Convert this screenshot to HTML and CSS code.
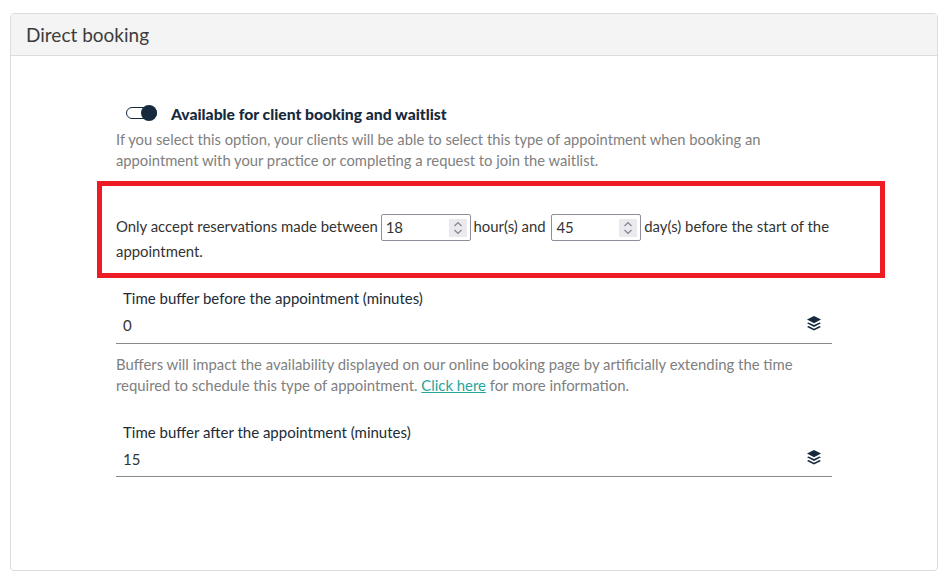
FILE: index.html
```html
<!DOCTYPE html>
<html lang="en">
<head>
  <meta charset="UTF-8" />
  <title>Direct booking</title>
  <link rel="stylesheet" href="styles.css">
</head>
<body>
  <section class="card">
    <h2 class="card-title">Direct booking</h2>
    <div class="card-body">
      <label class="switch-row">
        <span class="switch"><span class="switch-knob"></span></span>
        <span class="switch-label">Available for client booking and waitlist</span>
      </label>
      <p class="help">If you select this option, your clients will be able to select this type of appointment when booking an appointment with your practice or completing a request to join the waitlist.</p>

      <div class="highlight">
        <p class="window-text">Only accept reservations made between
          <span class="num"><input class="num-input" type="text" value="18"><span class="spin"><svg viewBox="0 0 18 18"><path d="M5.5 7 9 3.5 12.5 7"/><path d="M5.5 11 9 14.5 12.5 11"/></svg></span></span>
          hour(s) and
          <span class="num num-days"><input class="num-input" type="text" value="45"><span class="spin"><svg viewBox="0 0 18 18"><path d="M5.5 7 9 3.5 12.5 7"/><path d="M5.5 11 9 14.5 12.5 11"/></svg></span></span>
          day(s) before the start of the appointment.</p>
      </div>

      <div class="field field-first">
        <label class="field-label">Time buffer before the appointment (minutes)</label>
        <div class="field-row">
          <span class="field-value">0</span>
          <svg class="stack-icon" viewBox="0 0 16 16"><path d="M8 1 15 4.6 8 8.2 1 4.6Z"/><path d="M2.6 7.4 1 8.3 8 11.9 15 8.3 13.4 7.4 8 10.1Z"/><path d="M2.6 11 1 11.9 8 15.5 15 11.9 13.4 11 8 13.7Z"/></svg>
        </div>
      </div>
      <p class="help help-buffer">Buffers will impact the availability displayed on our online booking page by artificially extending the time required to schedule this type of appointment. <a href="#">Click here</a> for more information.</p>

      <div class="field">
        <label class="field-label">Time buffer after the appointment (minutes)</label>
        <div class="field-row">
          <span class="field-value">15</span>
          <svg class="stack-icon" viewBox="0 0 16 16"><path d="M8 1 15 4.6 8 8.2 1 4.6Z"/><path d="M2.6 7.4 1 8.3 8 11.9 15 8.3 13.4 7.4 8 10.1Z"/><path d="M2.6 11 1 11.9 8 15.5 15 11.9 13.4 11 8 13.7Z"/></svg>
        </div>
      </div>
    </div>
  </section>
</body>
</html>
```

FILE: styles.css
```css
* {
  box-sizing: border-box;
}

html, body {
  margin: 0;
  padding: 0;
  background: #fff;
}

body {
  font-family: Lato, sans-serif;
  font-size: 15px;
  color: #212b36;
}

.card {
  width: 928px;
  height: 558px;
  margin: 13px 0 0 10px;
  border: 1px solid #dcdcdc;
  border-radius: 4px;
}

.card-title {
  margin: 0;
  height: 42px;
  padding: 0 15px;
  font-size: 19px;
  font-weight: 400;
  line-height: 41px;
  color: #3c3c3c;
  background: #f4f4f4;
  border-bottom: 1px solid #dcdcdc;
}

.card-body {
  padding: 47px 0 0 105px;
  width: 821px;
}

.switch-row {
  display: flex;
  align-items: center;
  margin-left: 10px;
  height: 22px;
}

.switch {
  position: relative;
  display: block;
  width: 31px;
  height: 12px;
  margin: -2px 14px 0 0;
  border: 1px solid #16293d;
  border-radius: 6px;
}

.switch-knob {
  position: absolute;
  top: -3px;
  right: -1px;
  width: 16px;
  height: 16px;
  border-radius: 50%;
  background: #16293d;
}

.switch-label {
  font-size: 15.7px;
  font-weight: 900;
  color: #16293d;
}

.help {
  margin: 4px 0 0;
  font-size: 14.75px;
  line-height: 21px;
  color: #808080;
}

.highlight {
  margin: 10px 0 0 -19px;
  width: 788px;
  height: 97px;
  padding: 27.5px 14px 0;
  border: 5px solid #ed1c24;
}

.window-text {
  margin: 0;
  font-size: 14.9px;
  line-height: 25px;
  color: #333;
}

.num {
  display: inline-flex;
  align-items: center;
  width: 90px;
  height: 27px;
  margin: -2px -1px;
  padding: 0 3px 0 4px;
  border: 1px solid #8f8d9b;
  border-radius: 2px;
  vertical-align: middle;
}

.num-days {
  margin-left: 2px;
}

.num-input {
  flex: 1;
  min-width: 0;
  padding: 0 0 2px;
  border: 0;
  outline: 0;
  font-family: Lato, sans-serif;
  font-size: 15px;
  color: #333;
}

.spin {
  display: block;
  width: 18px;
  height: 18px;
  background: #e9e9ee;
}

.spin svg {
  display: block;
  width: 18px;
  height: 18px;
  fill: none;
  stroke: #85848d;
  stroke-width: 1.2;
}

.field {
  padding: 0 0 0 7px;
  border-bottom: 1px solid #8a8a8a;
}

.field-first {
  margin-top: 9.4px;
}

.field-label {
  display: block;
  line-height: 22px;
  color: #212b36;
}

.field-row {
  display: flex;
  justify-content: space-between;
  align-items: center;
  height: 33.2px;
  padding: 0 10px 2px 0;
}

.field-value {
  color: #333;
}

.stack-icon {
  width: 16px;
  height: 16px;
  margin-bottom: 4px;
  fill: #16293d;
}

.help-buffer {
  margin: 10.4px 0 25px;
  font-size: 14.88px;
}

.help a {
  color: #26a69a;
}
```
